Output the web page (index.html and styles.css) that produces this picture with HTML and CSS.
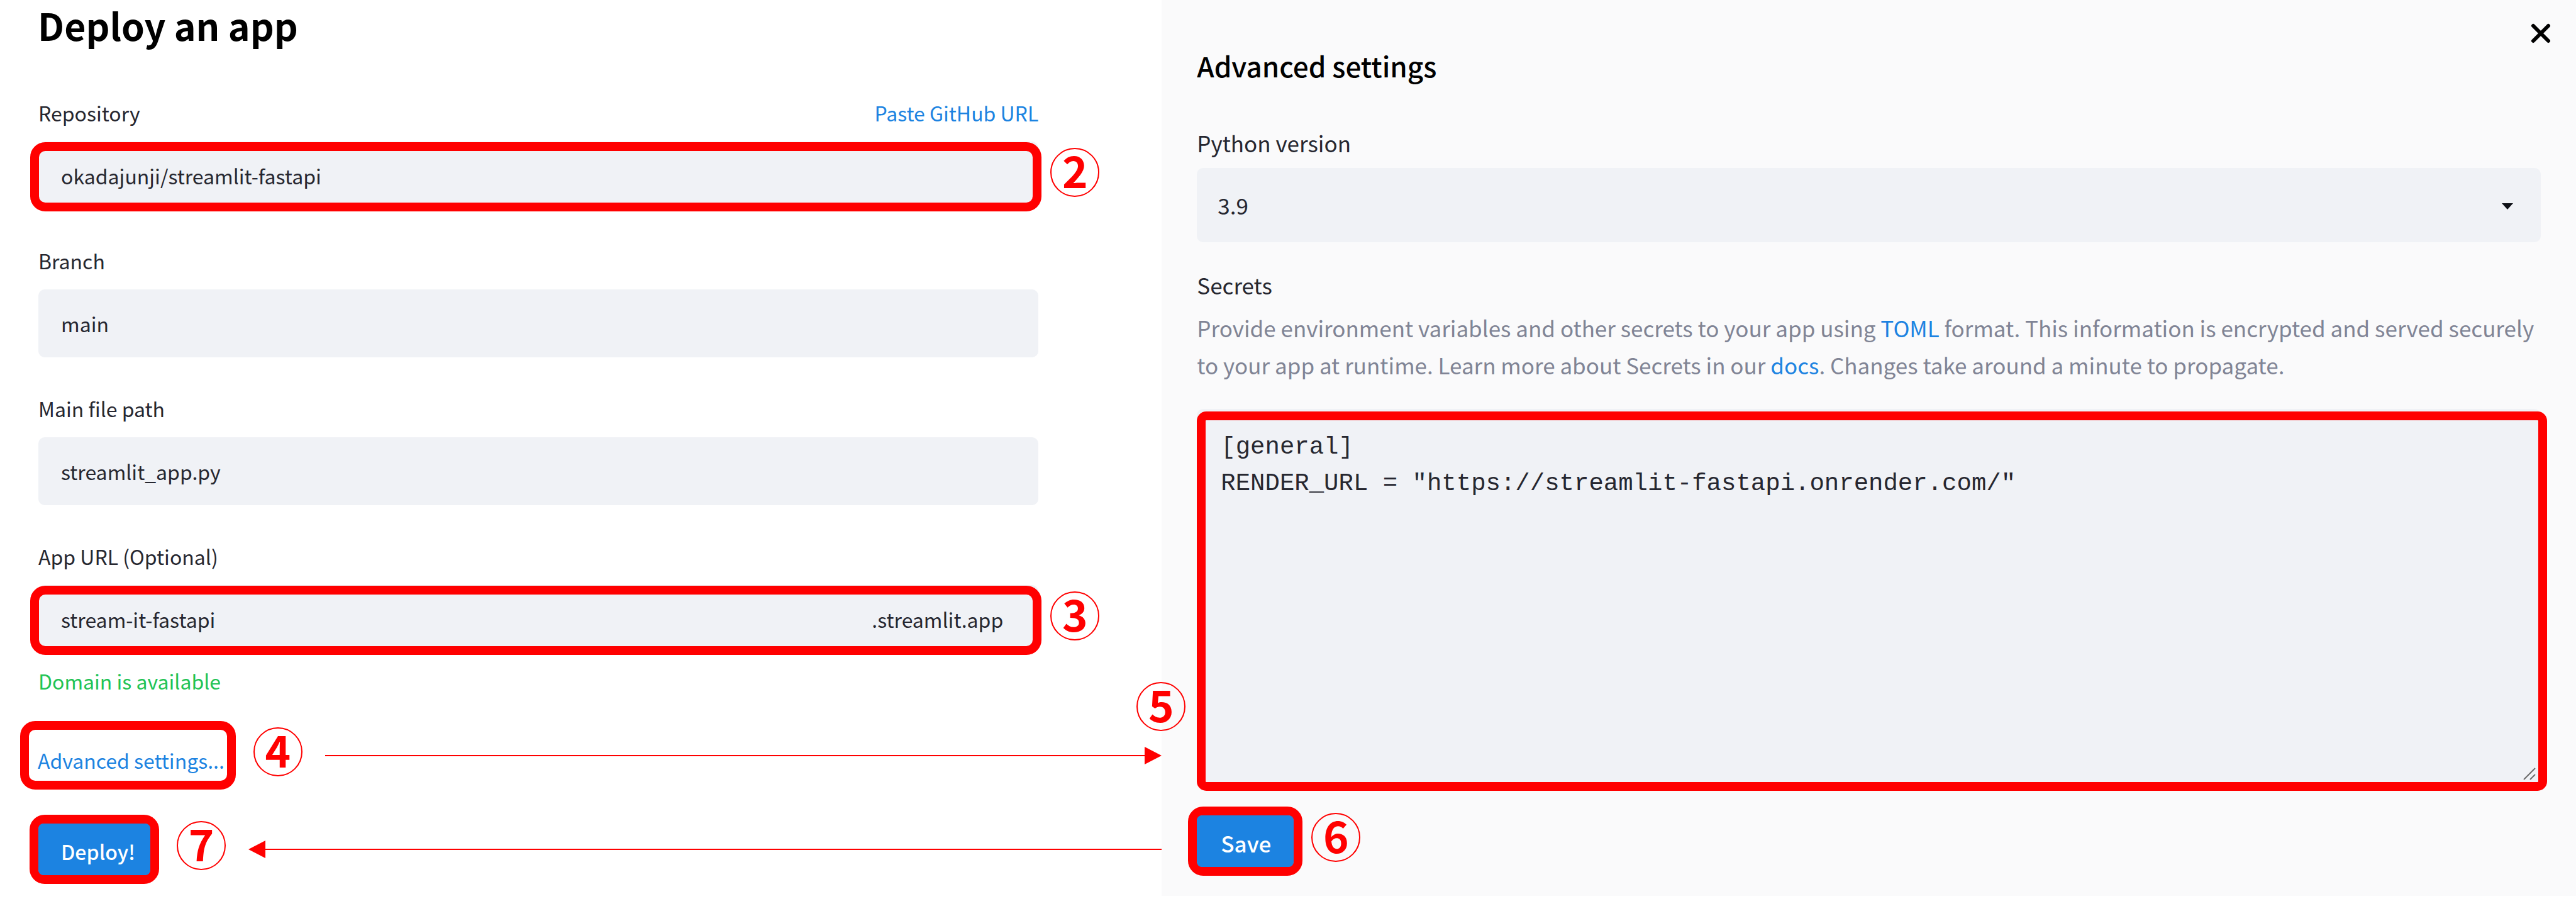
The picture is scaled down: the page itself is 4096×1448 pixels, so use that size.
FILE: index.html
```html
<!DOCTYPE html>
<html lang="en">
<head>
<meta charset="utf-8">
<title>Deploy an app</title>
<link rel="stylesheet" href="styles.css">
</head>
<body>
<main class="page">
  <form class="deploy">
    <h1 class="deploy-title">Deploy an app</h1>

    <div class="field">
      <div class="field-head">
        <label for="repository">Repository</label>
        <a class="link" href="#paste">Paste GitHub URL</a>
      </div>
      <div class="control">
        <input class="input" id="repository" type="text" value="okadajunji/streamlit-fastapi">
        <span class="outline"></span>
        <span class="step step-beside">2</span>
      </div>
    </div>

    <div class="field">
      <div class="field-head"><label for="branch">Branch</label></div>
      <div class="control">
        <input class="input" id="branch" type="text" value="main">
      </div>
    </div>

    <div class="field">
      <div class="field-head"><label for="path">Main file path</label></div>
      <div class="control">
        <input class="input" id="path" type="text" value="streamlit_app.py">
      </div>
    </div>

    <div class="field field-last">
      <div class="field-head"><label for="url">App URL (Optional)</label></div>
      <div class="control">
        <input class="input" id="url" type="text" value="stream-it-fastapi">
        <span class="suffix">.streamlit.app</span>
        <span class="outline"></span>
        <span class="step step-beside">3</span>
      </div>
      <p class="status">Domain is available</p>
    </div>

    <div class="action action-advanced">
      <span class="frame frame-link"><a class="link" href="#advanced">Advanced settings...</a></span>
      <span class="step">4</span>
      <span class="arrow arrow-right"></span>
    </div>

    <div class="action action-deploy">
      <span class="frame"><button class="button" type="submit">Deploy!</button></span>
      <span class="step">7</span>
      <span class="arrow arrow-left"></span>
    </div>
  </form>

  <form class="advanced" id="advanced">
    <button class="close" type="button" aria-label="Close">
      <svg viewBox="0 0 32 32" width="32" height="32"><path d="M4 4 28 28M28 4 4 28" fill="none" stroke="#000" stroke-width="6" stroke-linecap="round"/></svg>
    </button>
    <h2 class="advanced-title">Advanced settings</h2>

    <label class="label" for="python">Python version</label>
    <div class="select-box">
      <select class="select" id="python"><option>3.9</option><option>3.10</option><option>3.11</option></select>
      <svg class="caret" viewBox="0 0 18 10" width="18" height="10"><path d="M0 0H18L9 10Z" fill="#0e1117"/></svg>
    </div>

    <label class="label label-secrets" for="secrets">Secrets</label>
    <p class="help">Provide environment variables and other secrets to your app using <a class="link" href="#toml">TOML</a> format. This information is encrypted and served securely to your app at runtime. Learn more about Secrets in our <a class="link" href="#docs">docs</a>. Changes take around a minute to propagate.</p>
    <div class="secrets-box">
      <textarea class="secrets" id="secrets" spellcheck="false">[general]
RENDER_URL = "https://streamlit-fastapi.onrender.com/"</textarea>
      <svg class="grip" viewBox="0 0 20 20" width="20" height="20"><path d="M1 19 19 1M11 19 19 11" fill="none" stroke="#6b6b6b" stroke-width="2"/></svg>
      <span class="outline outline-secrets"></span>
      <span class="step step-secrets">5</span>
    </div>

    <div class="action action-save">
      <span class="frame"><button class="button button-save" type="submit">Save</button></span>
      <span class="step">6</span>
    </div>
  </form>
</main>
</body>
</html>
```
FILE: styles.css
```css
* {
  box-sizing: border-box;
}

body {
  margin: 0;
  background: #fff;
  color: #262730;
  font-family: "Noto Sans CJK JP", "Noto Sans", sans-serif;
  font-size: 32px;
  line-height: 48px;
}

h1, h2, p {
  margin: 0;
}

input, select, textarea, button {
  margin: 0;
  border: 0;
  font: inherit;
  color: inherit;
}

.page {
  display: grid;
  grid-template-columns: 451fr 549fr;
  align-items: start;
}

.link {
  color: #1c83e1;
  text-decoration: none;
}

/* Deploy form */

.deploy {
  display: flex;
  flex-direction: column;
}

.deploy-title {
  margin: 0 60px 75px;
  color: #000;
  font-size: 59px;
  font-weight: 700;
  line-height: 80px;
}

.field {
  margin: 0 196px 57px 61px;
}

.field-last {
  margin-bottom: 40px;
}

.field-head {
  display: flex;
  justify-content: space-between;
  margin-bottom: 22px;
}

.control {
  position: relative;
}

.input {
  display: block;
  width: 100%;
  height: 108px;
  padding: 0 36px;
  border-radius: 10px;
  background: #f0f2f6;
}

.suffix {
  position: absolute;
  top: 30px;
  right: 56px;
}

.status {
  margin-top: 20px;
  color: #21c354;
}

/* Red walkthrough marks */

.outline {
  position: absolute;
  inset: 1px -5px -3px -13px;
  border: 14px solid #f00;
  border-radius: 24px;
  pointer-events: none;
}

.outline-secrets {
  inset: 4px -10px -7px 0;
  border-radius: 15px;
}

.frame {
  border: 14px solid #f00;
  border-radius: 24px;
}

.frame-link {
  padding: 24px 4px 9px 14px;
}

.step {
  display: flex;
  flex: none;
  align-items: center;
  justify-content: center;
  width: 78px;
  height: 78px;
  padding-bottom: 10px;
  border: 2px solid #f00;
  border-radius: 50%;
  color: #f00;
  font-size: 69px;
  font-weight: 700;
  line-height: 64px;
}

.step-beside {
  position: absolute;
  top: 10px;
  left: calc(100% + 19px);
}

.step-secrets {
  position: absolute;
  top: 434px;
  left: -96px;
}

.action {
  display: flex;
  align-items: center;
  gap: 28px;
}

.action .step {
  margin-bottom: 12px;
}

.action-advanced {
  margin: 0 0 40px 32px;
}

.action-deploy {
  margin-left: 47px;
}

.arrow {
  display: flex;
  flex: 1;
  align-items: center;
  margin-left: 8px;
}

.arrow::before {
  content: "";
  flex: 1;
  height: 2px;
  background: #f00;
}

.arrow::after {
  content: "";
  border: 14px solid transparent;
}

.arrow-right::after {
  border-right-width: 0;
  border-left: 27px solid #f00;
}

.arrow-left {
  flex-direction: row-reverse;
}

.arrow-left::after {
  border-left-width: 0;
  border-right: 27px solid #f00;
}

.button {
  display: block;
  height: 82px;
  padding: 6px 24px 0 36px;
  border-radius: 8px;
  background: #1c83e1;
  color: #fff;
  font-size: 32px;
  font-weight: 500;
}

.button-save {
  padding: 6px 36px 0 38px;
  font-size: 35px;
}

/* Advanced settings panel */

.advanced {
  position: relative;
  display: flex;
  flex-direction: column;
  padding: 72px 56px 32px;
  background: #fafafb;
  font-size: 35px;
}

.close {
  position: absolute;
  top: 37px;
  right: 40px;
  padding: 0;
  background: none;
  line-height: 0;
}

.advanced-title {
  margin-bottom: 67px;
  color: #000;
  font-size: 44px;
  font-weight: 500;
  line-height: 64px;
}

.label-secrets {
  margin-top: 44px;
}

.select-box {
  position: relative;
  margin-top: 16px;
}

.select {
  display: block;
  width: 100%;
  height: 118px;
  padding: 0 33px;
  border-radius: 10px;
  background: #f0f2f6;
  appearance: none;
}

.caret {
  position: absolute;
  top: 56px;
  right: 44px;
}

.help {
  margin: 14px 0 41px;
  color: #808495;
  line-height: 59px;
}

.secrets-box {
  position: relative;
  margin-bottom: 32px;
}

.secrets {
  display: block;
  width: 100%;
  height: 600px;
  padding: 32px 38px;
  border-radius: 10px;
  background: #f0f2f6;
  font-family: "Liberation Mono", monospace;
  font-size: 39px;
  line-height: 58px;
  resize: none;
}

.grip {
  position: absolute;
  right: 8px;
  bottom: 10px;
}

.action-save {
  gap: 14px;
  margin-left: -14px;
}
```
